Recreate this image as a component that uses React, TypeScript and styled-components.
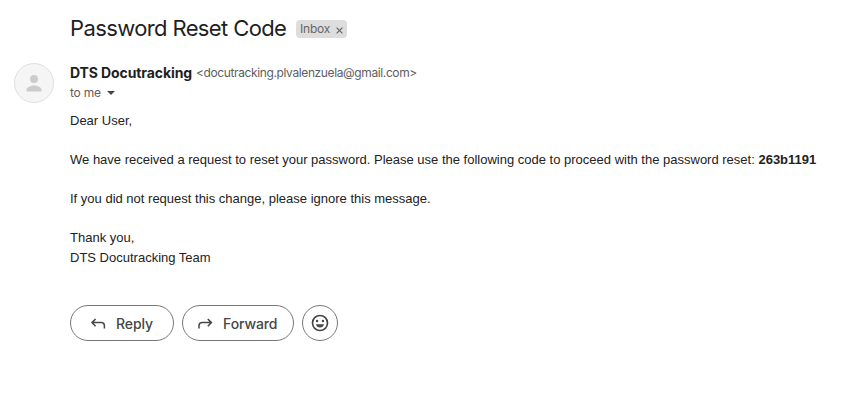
import React from "react";
import styled, { createGlobalStyle } from "styled-components";

const GlobalStyle = createGlobalStyle`
  * { box-sizing: border-box; }
  body { margin: 0; background: #fff; }
`;

const Page = styled.main`
  height: 418px;
  overflow: hidden;
  background: #fff;
  padding: 14px 0 0 14px;
  font-family: Inter, Roboto, sans-serif;
  white-space: nowrap;
`;

const SubjectRow = styled.header`
  display: flex;
  align-items: center;
  height: 28px;
  padding-left: 56px;
`;

const Subject = styled.h1`
  margin: 0;
  width: 226px;
  font-size: 22px;
  line-height: 28px;
  font-weight: 400;
  letter-spacing: -0.62px;
  color: #1f1f1f;
`;

const Label = styled.span`
  display: flex;
  align-items: center;
  width: 51px;
  height: 18px;
  margin-top: 2px;
  padding-left: 4px;
  gap: 6px;
  border-radius: 4px;
  background: #ddd;
  color: #666;
  font-size: 12px;
  line-height: 18px;
  letter-spacing: -0.2px;

  svg {
    margin-top: 2px;
  }
`;

const Message = styled.article`
  display: grid;
  grid-template-columns: 40px 1fr;
  column-gap: 16px;
  margin-top: 21px;
`;

const Avatar = styled.div`
  width: 40px;
  height: 40px;
  border: 1px solid #e0e0e0;
  border-radius: 50%;
  background: #f5f5f5;
  display: flex;
  align-items: center;
  justify-content: center;
`;

const Sender = styled.div`
  display: flex;
  align-items: center;
  height: 19px;
`;

const Name = styled.strong`
  width: 126px;
  font-size: 14px;
  font-weight: 700;
  letter-spacing: -0.1px;
  color: #1f1f1f;
`;

const Address = styled.span`
  font-size: 12px;
  letter-spacing: -0.38px;
  color: #5e5e5e;
`;

const Recipient = styled.div`
  display: flex;
  align-items: center;
  gap: 6px;
  height: 21px;
  font-size: 12px;
  letter-spacing: -0.2px;
  color: #5e5e5e;
`;

const Body = styled.div`
  margin-top: 8px;
  font-family: "Liberation Sans", Arial, sans-serif;
  font-size: 13px;
  line-height: 19.5px;
  color: #222;
`;

const Paragraph = styled.p`
  margin: 0 0 19.5px;
`;

const Actions = styled.div`
  display: flex;
  gap: 8px;
  margin-top: 38px;
`;

const ActionButton = styled.button<{ $width: number; $inset: number }>`
  display: flex;
  align-items: center;
  gap: 9px;
  width: ${(p) => p.$width}px;
  height: 36px;
  padding: 0 0 0 ${(p) => p.$inset}px;
  border: 1px solid #747775;
  border-radius: 18px;
  background: #fff;
  color: #444746;
  font-family: inherit;
  font-size: 14px;
  font-weight: 500;
  letter-spacing: -0.1px;
`;

const ReplyIcon = () => (
  <svg width="17" height="18" viewBox="0 0 17 18" fill="none" stroke="currentColor" strokeWidth="1.5">
    <path d="M5.600 5 2 8.600l3.600 3.600M2 8.600h9.200q3.200 0 3.200 3.200v2.600" />
  </svg>
);

const ForwardIcon = () => (
  <svg width="17" height="18" viewBox="0 0 17 18" fill="none" stroke="currentColor" strokeWidth="1.5">
    <path d="M10.800 5l3.600 3.600-3.600 3.600M14.400 8.600H5.200Q2 8.600 2 11.800v2.600" />
  </svg>
);

export default function App() {
  return (
    <>
      <GlobalStyle />
      <Page>
        <SubjectRow>
          <Subject>Password Reset Code</Subject>
          <Label>
            Inbox
            <svg width="7" height="7" viewBox="0 0 7 7" stroke="#666" strokeWidth="1.2">
              <path d="M.6.6l5.800 5.800M6.400.6.6 6.400" />
            </svg>
          </Label>
        </SubjectRow>
        <Message>
          <Avatar>
            <svg width="16" height="18" viewBox="0 0 16 18" fill="#ccc">
              <circle cx="8" cy="5" r="4" />
              <path d="M.5 17.500v-2C.5 13.200 5 11.500 8 11.500s7.500 1.700 7.500 4v2z" />
            </svg>
          </Avatar>
          <div>
            <Sender>
              <Name>DTS Docutracking</Name>
              <Address>&lt;docutracking.plvalenzuela@gmail.com&gt;</Address>
            </Sender>
            <Recipient>
              to me
              <svg width="8" height="4" viewBox="0 0 8 4" fill="#444746">
                <path d="M0 0h8L4 4z" />
              </svg>
            </Recipient>
            <Body>
              <Paragraph>Dear User,</Paragraph>
              <Paragraph>
                We have received a request to reset your password. Please use the following code to proceed with the password reset: <b>263b1191</b>
              </Paragraph>
              <Paragraph>If you did not request this change, please ignore this message.</Paragraph>
              <Paragraph>
                Thank you,
                <br />
                DTS Docutracking Team
              </Paragraph>
            </Body>
            <Actions>
              <ActionButton $width={104} $inset={19}>
                <ReplyIcon />
                Reply
              </ActionButton>
              <ActionButton $width={112} $inset={14}>
                <ForwardIcon />
                Forward
              </ActionButton>
              <ActionButton $width={36} $inset={7} aria-label="Add reaction">
                <svg width="20" height="20" viewBox="0 0 24 24" fill="currentColor">
                  <path d="M12 2a10 10 0 1 0 0 20 10 10 0 0 0 0-20zm0 18a8 8 0 1 1 0-16 8 8 0 0 1 0 16z" />
                  <circle cx="8.500" cy="9.500" r="1.500" />
                  <circle cx="15.500" cy="9.500" r="1.500" />
                  <path d="M7 13.500h10c-.7 2.300-2.700 4-5 4s-4.300-1.700-5-4z" />
                </svg>
              </ActionButton>
            </Actions>
          </div>
        </Message>
      </Page>
    </>
  );
}
